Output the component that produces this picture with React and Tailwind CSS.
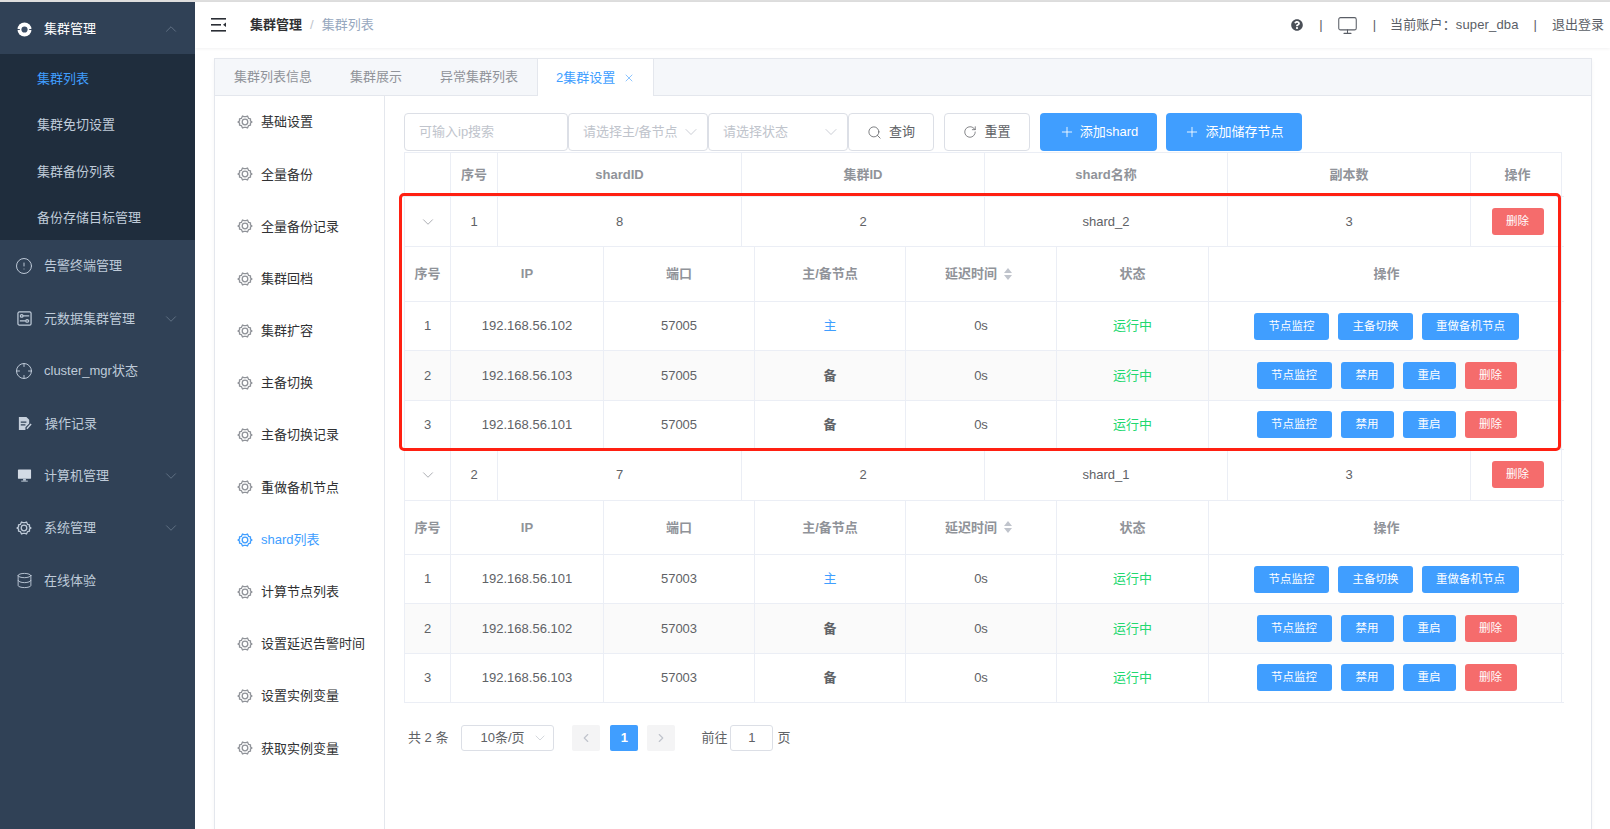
import React from "react";
import {
  ChevronDown,
  ChevronLeft,
  ChevronRight,
  ChevronUp,
  CircleAlert,
  Crosshair,
  Database,
  Monitor,
  Plus,
  RotateCw,
  Search,
  X,
} from "lucide-react";
import { FaQuestionCircle } from "react-icons/fa";

const RingIcon = () => (
  <svg viewBox="0 0 16 16" className="w-[15px] h-[15px]">
    <circle cx="8" cy="8" r="7.5" fill="#fff" />
    <circle cx="8" cy="8" r="3.3" fill="#3d4f66" />
    <rect x="0" y="7.5" width="3" height="1" fill="#304156" />
    <rect x="13" y="7.5" width="3" height="1" fill="#304156" />
  </svg>
);

const GearIcon = ({ className }) => (
  <svg viewBox="0 0 16 16" fill="none" stroke="currentColor" strokeWidth="1.3" strokeLinejoin="round" className={className}>
    <path d="M15 8l-1.6 1.1.1 2-1.9.5L10.5 14l-1.5-.6H7L5.5 14l-1.1-2.4-1.9-.5.1-2L1 8l1.6-1.1-.1-2 1.9-.5L5.5 2 7 2.6h2L10.5 2l1.1 2.4 1.9.5-.1 2z" />
    <circle cx="8" cy="8" r="2.8" />
  </svg>
);

const PanelIcon = () => (
  <svg viewBox="0 0 16 16" fill="none" stroke="#bfcbd9" strokeWidth="1.3" className="w-[15px] h-[15px]">
    <rect x="1" y="1" width="14" height="14" rx="1.5" />
    <circle cx="5" cy="5.2" r="1.4" />
    <path d="M6.4 5.2H13" />
    <circle cx="10.8" cy="10.6" r="1.4" />
    <path d="M3 10.6H9.4M12.2 10.6H13" />
  </svg>
);

const DocIcon = () => (
  <svg viewBox="0 0 16 16" className="w-[15px] h-[15px]">
    <path d="M2 1h8l3 3v4l-4 4v3H2z" fill="#c6d0dc" />
    <path d="M4 6.5h6M4 9.5h5" stroke="#304156" strokeWidth="1.2" />
    <path d="M15 8.5L10.5 13.5" stroke="#c6d0dc" strokeWidth="1.6" />
  </svg>
);

const ScreenIcon = () => (
  <svg viewBox="0 0 16 16" className="w-[15px] h-[15px]">
    <rect x="1" y="1.5" width="14" height="10" rx="0.5" fill="#d3dbe5" />
    <rect x="6.5" y="11.5" width="3" height="2" fill="#bfcbd9" />
    <rect x="4.5" y="13.5" width="7" height="1" fill="#bfcbd9" />
  </svg>
);

const FoldIcon = () => (
  <svg viewBox="0 0 15 14" className="w-[15px] h-[14px]" fill="#2b2f36">
    <rect x="0" y="0" width="15" height="1.6" />
    <rect x="0" y="6" width="10" height="1.6" />
    <rect x="0" y="12" width="15" height="1.6" />
    <path d="M15 4.6v4.4l-3-2.2z" />
  </svg>
);

const sideTop = [
  { icon: <CircleAlert size={18} strokeWidth={1.3} />, label: "告警终端管理" },
  { icon: <PanelIcon />, label: "元数据集群管理", more: true },
  { icon: <Crosshair size={18} strokeWidth={1.3} />, label: "cluster_mgr状态" },
  { icon: <DocIcon />, label: "操作记录", shift: true },
  { icon: <ScreenIcon />, label: "计算机管理", more: true },
  { icon: <GearIcon className="w-[16px] h-[16px]" />, label: "系统管理", more: true },
  { icon: <Database size={17} strokeWidth={1.3} />, label: "在线体验" },
];

const subMenu = ["集群列表", "集群免切设置", "集群备份列表", "备份存储目标管理"];

const settingMenu = [
  "基础设置",
  "全量备份",
  "全量备份记录",
  "集群回档",
  "集群扩容",
  "主备切换",
  "主备切换记录",
  "重做备机节点",
  "shard列表",
  "计算节点列表",
  "设置延迟告警时间",
  "设置实例变量",
  "获取实例变量",
];

const outerCols = "grid grid-cols-[46px_47px_244px_243px_243px_243px_93px]";
const innerCols = "grid grid-cols-[46px_153px_151px_151px_151px_152px_355px]";
const cell = "flex items-center justify-center border-r border-b border-[#ebeef5] last:border-r-0";

const Btn = ({ w, danger, children }) => (
  <button
    className={`h-[27px] rounded-[3px] text-white text-[11.5px] ${w} ${danger ? "bg-[#f56c6c]" : "bg-[#409eff]"}`}
  >
    {children}
  </button>
);

const NodeRow = ({ no, ip, port, role, striped }) => (
  <div className={`${innerCols} h-[49.33px] text-[13px] text-[#606266] ${striped ? "bg-[#fafafa]" : ""}`}>
    <div className={cell}>{no}</div>
    <div className={cell}>{ip}</div>
    <div className={cell}>{port}</div>
    <div className={`${cell} ${role === "主" ? "text-[#409eff]" : "font-bold"}`}>{role}</div>
    <div className={cell}>0s</div>
    <div className={`${cell} text-[#22d86f]`}>运行中</div>
    <div className={`${cell} gap-[9px]`}>
      <Btn w="w-[75px]">节点监控</Btn>
      {role === "主" ? (
        <>
          <Btn w="w-[75px]">主备切换</Btn>
          <Btn w="w-[97px]">重做备机节点</Btn>
        </>
      ) : (
        <>
          <Btn w="w-[53px]">禁用</Btn>
          <Btn w="w-[53px]">重启</Btn>
          <Btn w="w-[52px]" danger>
            删除
          </Btn>
        </>
      )}
    </div>
  </div>
);

const ShardGroup = ({ no, id, name, nodes, rowH, headH }) => (
  <div>
    <div className={`${outerCols} ${rowH} text-[13px] text-[#606266]`}>
      <div className={cell}>
        <ChevronDown size={18} strokeWidth={1} className="text-[#909399]" />
      </div>
      <div className={cell}>{no}</div>
      <div className={cell}>{id}</div>
      <div className={cell}>2</div>
      <div className={cell}>{name}</div>
      <div className={cell}>3</div>
      <div className={cell}>
        <Btn w="w-[52px]" danger>
          删除
        </Btn>
      </div>
    </div>
    <div className={`${innerCols} ${headH} text-[13px] font-bold text-[#909399]`}>
      <div className={cell}>序号</div>
      <div className={cell}>IP</div>
      <div className={cell}>端口</div>
      <div className={cell}>主/备节点</div>
      <div className={`${cell} gap-[6px] pr-[4px]`}>
        延迟时间
        <svg viewBox="0 0 10 14" className="w-[10px] h-[14px]" fill="#c0c4cc">
          <path d="M5 1l4 5H1zM5 13L1 8h8z" />
        </svg>
      </div>
      <div className={cell}>状态</div>
      <div className={cell}>操作</div>
    </div>
    {nodes.map((n, i) => (
      <NodeRow key={i} no={i + 1} ip={n[0]} port={n[1]} role={i === 0 ? "主" : "备"} striped={i === 1} />
    ))}
  </div>
);

const App = () => {
  return (
    <div className="w-[1610px] h-[829px] overflow-hidden flex flex-col bg-white font-['Liberation_Sans','Noto_Sans_CJK_SC',sans-serif]">
      <div className="h-[2px] bg-[#dedede] shrink-0" />
      <div className="flex flex-1 min-h-0">
        {/* sidebar */}
        <aside className="w-[195px] shrink-0 bg-[#304156] text-[13px] text-[#bfcbd9]">
          <div className="h-[52px] flex items-center pl-[17px] pr-[15px] pt-[2px] text-white">
            <RingIcon />
            <span className="ml-[12px] flex-1">集群管理</span>
            <ChevronUp size={18} strokeWidth={1} className="text-[#6f7f92]" />
          </div>
          <div className="bg-[#1f2d3d]">
            {subMenu.map((s, i) => (
              <div
                key={s}
                className={`h-[46.5px] flex items-center pl-[37px] pt-[2px] ${i === 0 ? "text-[#409eff]" : ""}`}
              >
                {s}
              </div>
            ))}
          </div>
          {sideTop.map((m) => (
            <div key={m.label} className="h-[52.4px] flex items-center pl-[15px] pr-[15px]">
              <span className="w-[18px] flex justify-center">{m.icon}</span>
              <span className={`flex-1 ${m.shift ? "ml-[12px]" : "ml-[11px]"}`}>{m.label}</span>
              {m.more && <ChevronDown size={18} strokeWidth={1} className="text-[#6f7f92]" />}
            </div>
          ))}
        </aside>

        <main className="flex-1 min-w-0 flex flex-col">
          {/* top bar */}
          <header className="h-[46px] shrink-0 flex items-center pl-[16px] pr-[6px] shadow-[0_1px_3px_rgba(0,21,41,0.06)] text-[13px]">
            <FoldIcon />
            <span className="ml-[24px] font-bold text-[#303133]">集群管理</span>
            <span className="mx-[8px] text-[#c0c4cc]">/</span>
            <span className="text-[#97a8be]">集群列表</span>
            <div className="ml-auto flex items-center text-[#5a5e66]">
              <FaQuestionCircle size={12} className="text-[#4a4f57]" />
              <span className="ml-[16px]">|</span>
              <Monitor size={21} strokeWidth={1.2} className="ml-[14px] text-[#5a5e66]" />
              <span className="ml-[15px]">|</span>
              <span className="ml-[14px] tracking-[0.15px]">当前账户：super_dba</span>
              <span className="ml-[15px]">|</span>
              <span className="ml-[15px]">退出登录</span>
            </div>
          </header>

          {/* card */}
          <section className="mt-[10px] ml-[19px] mr-[18px] flex-1 min-h-0 flex flex-col border border-[#e4e7ed] border-b-0 shadow-[0_2px_4px_rgba(0,0,0,0.04)]">
            <div className="h-[37px] shrink-0 flex bg-[#f5f7fa] border-b border-[#e4e7ed] text-[13px] text-[#909399]">
              <div className="px-[19px] flex items-center">集群列表信息</div>
              <div className="px-[19px] flex items-center">集群展示</div>
              <div className="px-[19px] flex items-center">异常集群列表</div>
              <div className="h-[37px] w-[117px] flex items-center justify-center gap-[8px] bg-white border-x border-[#e4e7ed] text-[#409eff]">
                2集群设置
                <X size={12} strokeWidth={1.2} />
              </div>
            </div>

            <div className="flex-1 min-h-0 flex">
              <nav className="w-[170px] shrink-0 border-r border-[#e4e7ed] text-[13px] text-[#303133]">
                {settingMenu.map((m) => (
                  <div
                    key={m}
                    className={`h-[52.2px] flex items-center gap-[8px] pl-[22px] ${m === "shard列表" ? "text-[#409eff]" : ""}`}
                  >
                    <GearIcon className={`w-[16px] h-[16px] ${m === "shard列表" ? "" : "text-[#909399]"}`} />
                    {m}
                  </div>
                ))}
              </nav>

              <div className="flex-1 min-w-0 pl-[19px] pr-[29px] pt-[17px]">
                {/* filters */}
                <div className="flex h-[38px] text-[13px]">
                  <input
                    placeholder="可输入ip搜索"
                    className="w-[164px] rounded-[4px] border border-[#dcdfe6] px-[14px] outline-none placeholder:text-[#c0c4cc]"
                  />
                  <div className="w-[140px] rounded-[4px] border border-[#dcdfe6] pl-[14px] pr-[6px] flex items-center justify-between text-[#c0c4cc]">
                    请选择主/备节点
                    <ChevronDown size={20} strokeWidth={1} />
                  </div>
                  <div className="w-[140px] rounded-[4px] border border-[#dcdfe6] pl-[14px] pr-[6px] flex items-center justify-between text-[#c0c4cc]">
                    请选择状态
                    <ChevronDown size={20} strokeWidth={1} />
                  </div>
                  <button className="w-[86px] rounded-[4px] border border-[#dcdfe6] flex items-center justify-center gap-[7px] text-[#606266]">
                    <Search size={15} strokeWidth={1.3} />
                    查询
                  </button>
                  <button className="w-[86px] ml-[10px] rounded-[4px] border border-[#dcdfe6] flex items-center justify-center gap-[7px] text-[#606266]">
                    <RotateCw size={14} strokeWidth={1.3} />
                    重置
                  </button>
                  <button className="w-[117px] ml-[10px] rounded-[4px] bg-[#409eff] text-white flex items-center justify-center gap-[5px]">
                    <Plus size={16} strokeWidth={1.3} />
                    添加shard
                  </button>
                  <button className="w-[136px] ml-[9px] rounded-[4px] bg-[#409eff] text-white flex items-center justify-center gap-[5px]">
                    <Plus size={16} strokeWidth={1.3} />
                    添加储存节点
                  </button>
                </div>

                {/* table */}
                <div className="mt-px border-l border-r border-t border-[#ebeef5]">
                  <div className={`${outerCols} h-[44px] text-[13px] font-bold text-[#909399]`}>
                    <div className={cell} />
                    <div className={cell}>序号</div>
                    <div className={cell}>shardID</div>
                    <div className={cell}>集群ID</div>
                    <div className={cell}>shard名称</div>
                    <div className={cell}>副本数</div>
                    <div className={cell}>操作</div>
                  </div>
                  <div className="relative">
                    <ShardGroup
                      no={1}
                      id={8}
                      name="shard_2"
                      rowH="h-[50px]"
                      headH="h-[55px]"
                      nodes={[
                        ["192.168.56.102", "57005"],
                        ["192.168.56.103", "57005"],
                        ["192.168.56.101", "57005"],
                      ]}
                    />
                    <div className="absolute -top-[4px] -left-[6px] right-0 h-[258px] border-[3px] border-[#ff2012] rounded-[5px] pointer-events-none" />
                  </div>
                  <ShardGroup
                    no={2}
                    id={7}
                    name="shard_1"
                    rowH="h-[51px]"
                    headH="h-[54px]"
                    nodes={[
                      ["192.168.56.101", "57003"],
                      ["192.168.56.102", "57003"],
                      ["192.168.56.103", "57003"],
                    ]}
                  />
                </div>

                {/* pagination */}
                <div className="mt-[22px] flex items-center h-[26px] text-[13px] text-[#606266]">
                  <span className="ml-[4px]">共 2 条</span>
                  <div className="ml-[13px] w-[93px] h-[26px] rounded-[3px] border border-[#dcdfe6] flex items-center justify-between pl-[18px] pr-[5px]">
                    10条/页
                    <ChevronDown size={16} strokeWidth={1} className="text-[#c0c4cc]" />
                  </div>
                  <div className="ml-[18px] w-[28px] h-[26px] rounded-[2px] bg-[#f4f4f5] flex items-center justify-center text-[#c0c4cc]">
                    <ChevronLeft size={14} strokeWidth={2} />
                  </div>
                  <div className="ml-[10px] w-[28px] h-[26px] rounded-[2px] bg-[#409eff] text-white font-bold flex items-center justify-center">
                    1
                  </div>
                  <div className="ml-[9px] w-[28px] h-[26px] rounded-[2px] bg-[#f4f4f5] flex items-center justify-center text-[#c0c4cc]">
                    <ChevronRight size={14} strokeWidth={2} />
                  </div>
                  <span className="ml-[26px]">前往</span>
                  <div className="ml-[3px] w-[43px] h-[26px] rounded-[3px] border border-[#dcdfe6] flex items-center justify-center">
                    1
                  </div>
                  <span className="ml-[4px]">页</span>
                </div>
              </div>
            </div>
          </section>
        </main>
      </div>
    </div>
  );
};

export default App;
